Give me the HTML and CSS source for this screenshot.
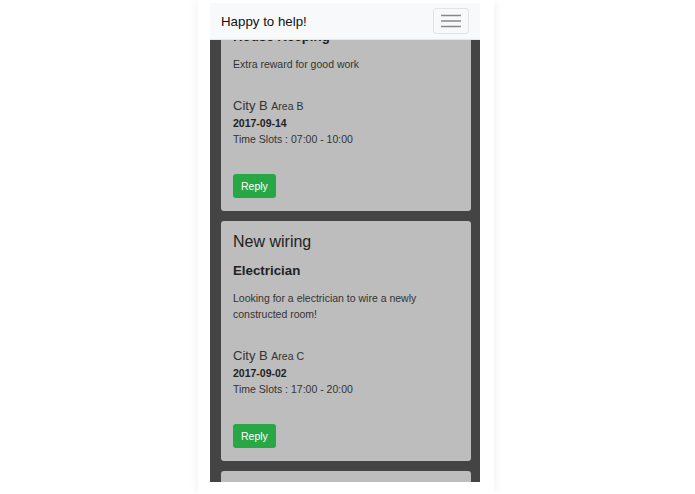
FILE: index.html
```html
<!DOCTYPE html>
<html>
<head>
<meta charset="utf-8">
<link rel="stylesheet" href="styles.css">
</head>
<body>
<div class="frame">
  <div class="screen">
    <nav class="navbar">
      <span class="brand">Happy to help!</span>
      <button class="toggler" aria-label="menu">
        <svg width="20" height="14" viewBox="0 0 20 14"><path d="M0 1.5H20M0 7H20M0 12.5H20" stroke="#888" stroke-width="1.6"/></svg>
      </button>
    </nav>
    <div class="content">
      <div class="card">
        <h4 class="title">Cleaning</h4>
        <h5 class="subtitle">House Keeping</h5>
        <p class="desc">Extra reward for good work</p>
        <div class="city">City B <small>Area B</small></div>
        <div class="date">2017-09-14</div>
        <div class="slots">Time Slots : 07:00 - 10:00</div>
        <button class="reply">Reply</button>
      </div>
      <div class="card">
        <h4 class="title">New wiring</h4>
        <h5 class="subtitle">Electrician</h5>
        <p class="desc">Looking for a electrician to wire a newly constructed room!</p>
        <div class="city">City B <small>Area C</small></div>
        <div class="date">2017-09-02</div>
        <div class="slots">Time Slots : 17:00 - 20:00</div>
        <button class="reply">Reply</button>
      </div>
      <div class="card">
        <h4 class="title">Painting</h4>
        <h5 class="subtitle">Painter</h5>
        <p class="desc">Need a painter</p>
      </div>
    </div>
  </div>
</div>
</body>
</html>
```
FILE: styles.css
```css
html, body {
  margin: 0;
  padding: 0;
  background: #ffffff;
  font-family: "Liberation Sans", Arial, sans-serif;
}
.frame {
  margin-left: 198px;
  width: 296px;
  height: 492px;
  box-sizing: border-box;
  padding: 3px 14px 10px 12px;
  background: #ffffff;
  box-shadow: 0 0 10px rgba(0, 0, 0, 0.07);
}
.screen {
  position: relative;
  width: 270px;
  height: 479px;
  overflow: hidden;
  background: #444444;
}
.navbar {
  position: absolute;
  top: 0;
  left: 0;
  right: 0;
  height: 37px;
  box-sizing: border-box;
  background: #f8f9fa;
  border-bottom: 1px solid #e6e6e6;
  display: flex;
  align-items: center;
  justify-content: space-between;
  padding: 0 11px;
  z-index: 2;
}
.brand {
  font-size: 13.3px;
  color: #111;
}
.toggler {
  width: 36px;
  height: 26px;
  margin-top: -1px;
  border: 1px solid #e3e3e3;
  border-radius: 3px;
  background: transparent;
  display: flex;
  align-items: center;
  justify-content: center;
  padding: 0;
}
.content {
  margin-top: -16px;
  padding: 0 9px 0 11px;
}
.card {
  background: #bdbdbd;
  border-radius: 3px;
  padding: 11px 12px 13px;
  margin-bottom: 10px;
  color: #222;
}
.title {
  margin: 0 0 12px;
  font-size: 16px;
  line-height: 19px;
  font-weight: normal;
  color: #222;
}
.subtitle {
  margin: 0 0 11px;
  font-size: 13.3px;
  line-height: 16px;
  font-weight: bold;
  color: #222;
}
.desc {
  margin: 0 0 24px;
  font-size: 10.5px;
  line-height: 16px;
  color: #333;
}
.city {
  font-size: 13px;
  line-height: 19px;
  height: 19px;
  color: #333;
}
.city small {
  font-size: 10.5px;
  line-height: 1;
}
.date {
  font-size: 10.5px;
  line-height: 16px;
  font-weight: bold;
  color: #222;
}
.slots {
  font-size: 10.5px;
  line-height: 16px;
  color: #333;
}
.reply {
  margin-top: 27px;
  height: 24px;
  padding: 0 8px;
  border: none;
  border-radius: 3px;
  background: #28a745;
  color: #fff;
  font-family: "Liberation Sans", Arial, sans-serif;
  font-size: 10.5px;
  display: block;
}
```
